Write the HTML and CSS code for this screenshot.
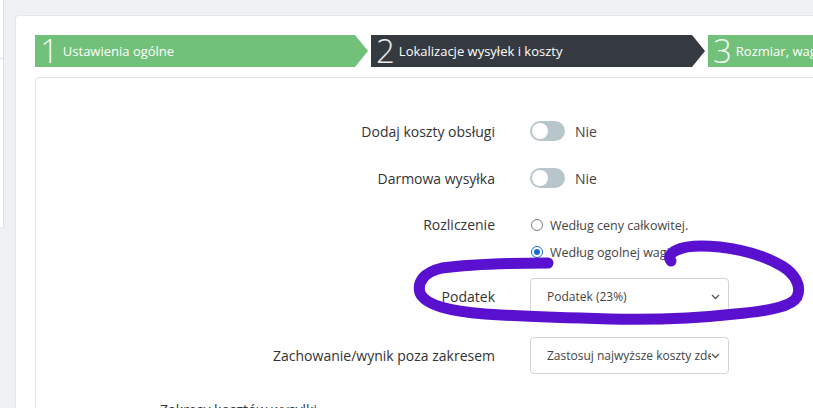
FILE: index.html
```html
<!DOCTYPE html>
<html lang="pl">
<head>
    <meta charset="UTF-8">
    <meta name="viewport" content="width=device-width, initial-scale=1.0">
    <title>Lokalizacje wysyłek i koszty</title>
    <link rel="stylesheet" href="styles.css">
</head>
<body>
    <div class="page">
        <div class="side">
            <div class="side-head"></div>
        </div>

        <div class="main">
            <div class="steps">
                <div class="step done"><span class="num">1</span>Ustawienia ogólne</div>
                <div class="step active"><span class="num">2</span>Lokalizacje wysyłek i koszty</div>
                <div class="step done last"><span class="num">3</span>Rozmiar, waga i ceny</div>
            </div>

            <div class="box">
                <div class="form">
                    <div class="row">
                        <div class="label">Dodaj koszty obsługi</div>
                        <div class="field">
                            <span class="toggle"></span>
                            <span class="toggle-text">Nie</span>
                        </div>
                    </div>
                    <div class="row">
                        <div class="label">Darmowa wysyłka</div>
                        <div class="field">
                            <span class="toggle"></span>
                            <span class="toggle-text">Nie</span>
                        </div>
                    </div>
                    <div class="row row-radio">
                        <div class="label">Rozliczenie</div>
                        <div class="radios">
                            <div class="radio"><span class="dot"></span>Według ceny całkowitej.</div>
                            <div class="radio"><span class="dot checked"></span>Według ogolnej wagi</div>
                        </div>
                    </div>
                    <div class="row row-select">
                        <div class="label">Podatek</div>
                        <div class="select">
                            <span class="select-text">Podatek (23%)</span>
                            <svg class="chev" width="9" height="6" viewBox="0 0 9 6"><path d="M1 1l3.5 3.5L8 1" fill="none" stroke="#555" stroke-width="1.3"/></svg>
                        </div>
                    </div>
                    <div class="row row-select">
                        <div class="label">Zachowanie/wynik poza zakresem</div>
                        <div class="select">
                            <span class="select-text">Zastosuj najwyższe koszty zdefiniowane</span>
                            <svg class="chev" width="9" height="6" viewBox="0 0 9 6"><path d="M1 1l3.5 3.5L8 1" fill="none" stroke="#555" stroke-width="1.3"/></svg>
                        </div>
                    </div>
                    <div class="section-title">Zakresy kosztów wysyłki</div>
                </div>
            </div>
        </div>
    </div>

    <!-- odręczne zaznaczenie -->
    <svg class="mark" width="813" height="408" viewBox="0 0 813 408">
        <path d="M548 263 C510 263 470 264 442 268 C424 272 417 282 420 293 C425 305 450 311 485 314 C530 317 570 318 610 319 C660 320 700 318 735 314 C770 311 792 306 797 297 C802 286 795 274 782 266 C765 256 745 250 720 247 C700 245 685 246 677 250 C670 253 668 257 671 261" fill="none" stroke="#5a10cf" stroke-width="11" stroke-linecap="round" stroke-linejoin="round"/>
    </svg>
</body>
</html>
```

FILE: styles.css
```css
body {
    margin: 0;
    font-family: 'Open Sans', 'Noto Sans', sans-serif;
    background: #eef0f2;
    color: #333;
    overflow: hidden;
    height: 408px;
}

.page {
    display: flex;
    align-items: flex-start;
}

/* lewy panel (prawie poza ekranem) */
.side {
    flex: none;
    width: 3px;
    height: 227px;
    background: #fff;
    border-right: 1px solid #dfe2e5;
    border-bottom: 1px solid #e6e8ea;
}

.side-head {
    height: 58px;
    border-bottom: 1px solid #dfe2e5;
}

.main {
    flex: none;
    width: 1000px;
    height: 600px;
    box-sizing: border-box;
    margin: 15px 0 0 11px;
    padding: 19px 20px 20px 19px;
    background: #fff;
    border: 1px solid #e3e5e8;
    border-radius: 4px;
}

/* kroki */
.steps {
    display: flex;
    gap: 3px;
    height: 32px;
}

.step {
    flex: none;
    width: 333px;
    display: flex;
    align-items: center;
    color: #fff;
    font-size: 13px;
    clip-path: polygon(0 0, calc(100% - 13px) 0, 100% 50%, calc(100% - 13px) 100%, 0 100%);
}

.step.done {
    background: #72c17a;
}

.step.active {
    background: #353a40;
    width: 334px;
}

.step.last {
    width: 400px;
}

.step .num {
    font-size: 33px;
    font-weight: 300;
    line-height: 32px;
    margin: 0 4px 0 5px;
    color: rgba(255, 255, 255, 0.92);
}

/* formularz */
.box {
    margin-top: 10px;
    border: 1px solid #e2e2e2;
    border-radius: 4px;
    height: 500px;
}

.form {
    padding-top: 43px;
}

.row {
    display: grid;
    grid-template-columns: 459px 200px;
    column-gap: 35px;
    align-items: center;
    margin-bottom: 27px;
}

.label {
    text-align: right;
    font-size: 14px;
    color: #333;
}

.field {
    display: flex;
    align-items: center;
    height: 20px;
}

.toggle {
    position: relative;
    width: 35px;
    height: 20px;
    border-radius: 10px;
    background: #b8c6cc;
}

.toggle::after {
    content: '';
    position: absolute;
    left: 2px;
    top: 2px;
    width: 16px;
    height: 16px;
    border-radius: 50%;
    background: #fff;
}

.toggle-text {
    margin-left: 10px;
    font-size: 14px;
    color: #444;
}

.row-radio {
    align-items: start;
    margin-bottom: 16px;
}

.row-radio .label {
    line-height: 20px;
}

.radios {
    display: flex;
    flex-direction: column;
    gap: 7px;
}

.radio {
    display: flex;
    align-items: center;
    height: 20px;
    font-size: 12.5px;
    color: #444;
    white-space: nowrap;
}

.dot {
    width: 10px;
    height: 10px;
    border: 1.5px solid #7a7a7a;
    border-radius: 50%;
    margin: 0 7px 0 1px;
    position: relative;
}

.dot.checked {
    border-color: #1a6ec8;
}

.dot.checked::after {
    content: '';
    position: absolute;
    left: 2px;
    top: 2px;
    width: 6px;
    height: 6px;
    border-radius: 50%;
    background: #1a6ec8;
}

.row-select {
    margin-bottom: 22px;
}

.select {
    display: flex;
    align-items: center;
    height: 37px;
    width: 199px;
    box-sizing: border-box;
    border: 1px solid #cfd4d8;
    border-radius: 4px;
    padding: 0 8px 0 16px;
    font-size: 12px;
    color: #444;
}

.select-text {
    flex: 1;
    overflow: hidden;
    white-space: nowrap;
}

.chev {
    flex: none;
}

.section-title {
    padding-left: 124px;
    padding-top: 4px;
    font-size: 14px;
}

.mark {
    position: absolute;
    top: 0;
    left: 0;
    pointer-events: none;
}
```
